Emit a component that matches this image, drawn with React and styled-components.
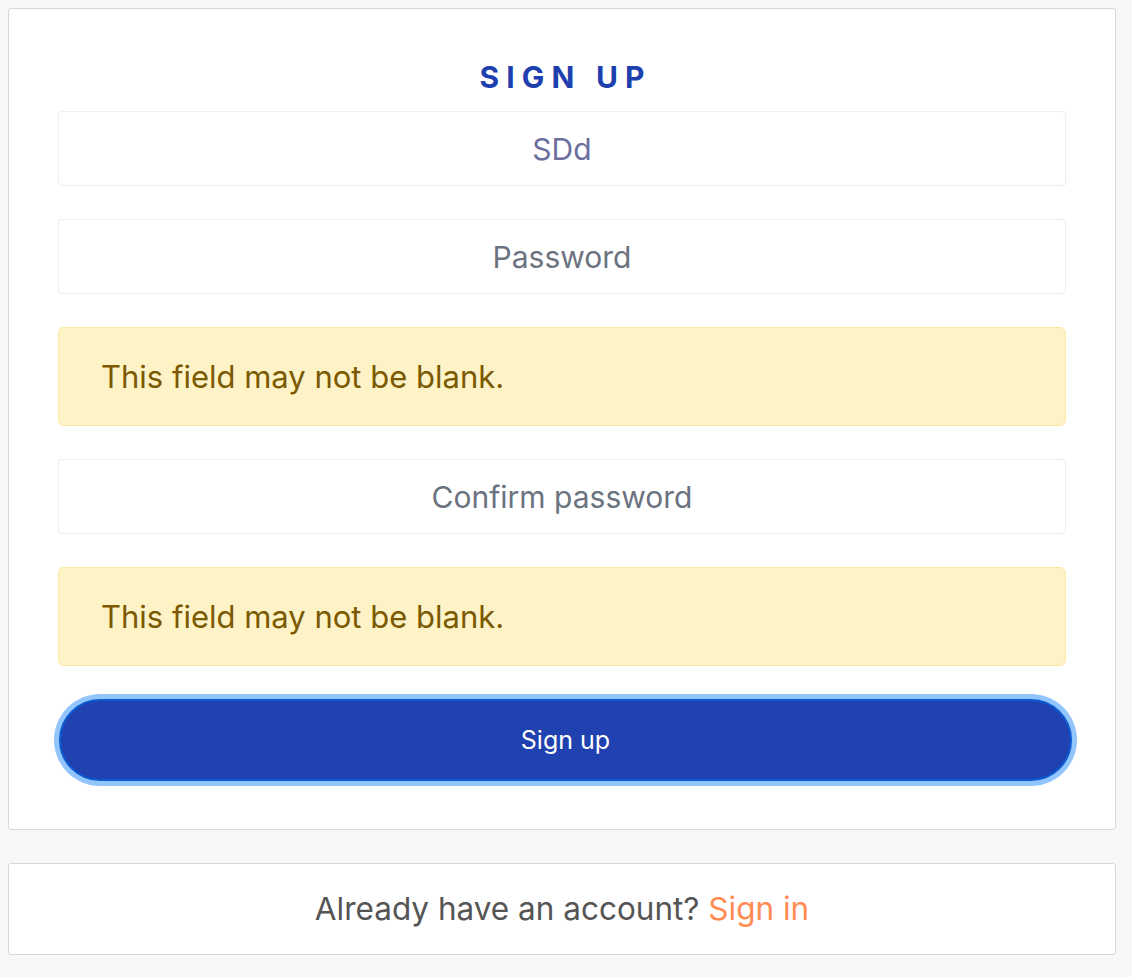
import React from "react";
import styled, { createGlobalStyle } from "styled-components";

const Global = createGlobalStyle`
  html, body { margin: 0; padding: 0; background: #f7f7f7; }
  body { font-family: "Inter", "Noto Sans", sans-serif; }
  * { box-sizing: border-box; }
`;

const Page = styled.div`
  padding: 8px;
  display: flex;
  flex-direction: column;
  gap: 33px;
`;

const Card = styled.div`
  width: 1108px;
  background: #fff;
  border: 1px solid #d8d8dc;
  border-radius: 3px;
  padding: ${(p) => p.$pad};
`;

const Form = styled.form`
  display: flex;
  flex-direction: column;
  gap: 33px;
`;

const Title = styled.h1`
  margin: 0 0 -18px;
  text-align: center;
  font-size: 30px;
  line-height: 38px;
  font-weight: 700;
  letter-spacing: 0.24em;
  color: #1e40af;
  padding-left: 0.24em;
`;

const Input = styled.input`
  width: 100%;
  height: 75px;
  border: 1px solid #eeeef4;
  border-radius: 3px;
  background: #fff;
  text-align: center;
  font-family: inherit;
  font-size: 30px;
  color: #6b6e9e;
  outline: none;
  &::placeholder { color: #6b7280; }
`;

const Alert = styled.div`
  height: 99px;
  display: flex;
  align-items: center;
  padding: 0 42px;
  background: #fef3c7;
  border: 1px solid #fde8a2;
  border-radius: 6px;
  color: #7a5900;
  font-size: 31px;
`;

const Button = styled.button`
  width: 1013px;
  margin: 0 0 0 1px;
  height: 82px;
  border-radius: 41px;
  border: 2px solid #0b5ad0;
  background: #1f42b0;
  box-shadow: 0 0 0 5px #93c5fd;
  color: #fff;
  font-family: inherit;
  font-size: 25px;
  cursor: pointer;
`;

const Footer = styled.p`
  margin: 0;
  text-align: center;
  font-size: 31.5px;
  line-height: 34px;
  color: #555;
`;

const Link = styled.a`
  color: #ff8c55;
  text-decoration: none;
`;

export default function App() {
  return (
    <>
      <Global />
      <Page>
        <Card $pad="49px 49px 48px">
          <Form onSubmit={(e) => e.preventDefault()}>
            <Title>SIGN UP</Title>
            <Input defaultValue="SDd" />
            <Input type="password" placeholder="Password" />
            <Alert>This field may not be blank.</Alert>
            <Input type="password" placeholder="Confirm password" />
            <Alert>This field may not be blank.</Alert>
            <Button type="submit">Sign up</Button>
          </Form>
        </Card>
        <Card $pad="28px 49px">
          <Footer>
            Already have an account? <Link href="#">Sign in</Link>
          </Footer>
        </Card>
      </Page>
    </>
  );
}
